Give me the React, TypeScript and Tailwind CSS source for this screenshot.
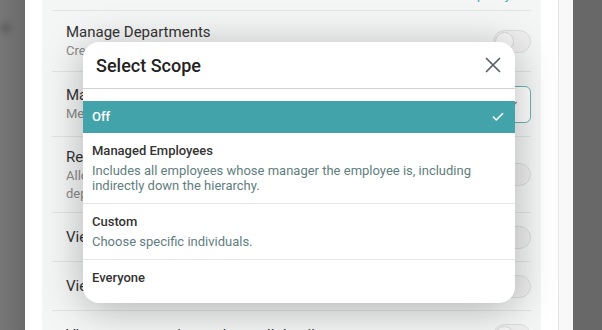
import { Check, ChevronDown, X } from "lucide-react";

type Row = {
  title: string;
  desc?: string;
  height: string;
  control: "toggle" | "select";
};

const rows: Row[] = [
  { title: "Manage Departments", desc: "Create, edit and delete departments.", height: "h-[61px]", control: "toggle" },
  { title: "Manage Employee Data", desc: "Member of the managed scope can be edited.", height: "h-[65px]", control: "select" },
  {
    title: "Request Time Off for Others",
    desc: "Allows the user to request absences for employees in their department and team.",
    height: "h-[76px]",
    control: "toggle",
  },
  { title: "View Reports", height: "h-[49px]", control: "toggle" },
  { title: "View Org Chart", height: "h-[49px]", control: "toggle" },
  { title: "View compensation and payroll details", height: "h-[49px]", control: "toggle" },
];

const options = [
  { label: "Off", selected: true },
  {
    label: "Managed Employees",
    desc: "Includes all employees whose manager the employee is, including indirectly down the hierarchy.",
  },
  { label: "Custom", desc: "Choose specific individuals." },
  { label: "Everyone" },
];

function Toggle() {
  return (
    <div className="flex h-[23px] w-[38px] shrink-0 items-center rounded-full border border-[#dcdcdc] bg-[#eeeeee] px-[1px]">
      <div className="h-[19px] w-[19px] rounded-full border border-[#d8d8d8] bg-[#f6f6f6]" />
    </div>
  );
}

export default function App() {
  return (
    <div
      className="relative flex h-[330px] w-[602px] overflow-hidden bg-white"
      style={{ fontFamily: "Roboto, 'Noto Sans', sans-serif" }}
    >
      {/* backdrop on the left */}
      <div className="relative w-[25px] shrink-0 bg-gradient-to-r from-[#777777] to-[#6a6a6a]">
        <div className="absolute left-[1px] top-[23px] h-[10px] w-[10px] rounded-full bg-[#5c5c5c] blur-[3px]" />
      </div>

      {/* drawer */}
      <div className="flex flex-1 bg-white">
        <div className="flex-1 pl-[17px] pr-[17px]">
          <div className="w-[499px] bg-[#f4f5f5] px-[10px]">
            <div className="flex h-[10px] justify-end overflow-hidden pr-[20px]">
              <span className="-mt-[13px] text-[13px] leading-[16px] text-[#3fa0a8]">Learn more about policy</span>
            </div>
            {rows.map((row) => (
              <div
                key={row.title}
                className={`flex ${row.height} items-center justify-between border-t border-[#e2e4e4] pl-[14px]`}
              >
                <div className="max-w-[380px]">
                  <p className="text-[15px] leading-[20px] text-[#333333]">{row.title}</p>
                  {row.desc && <p className="text-[13px] leading-[18px] text-[#8a8a8a]">{row.desc}</p>}
                </div>
                {row.control === "toggle" ? (
                  <Toggle />
                ) : (
                  <div className="flex h-[37px] w-[100px] items-center justify-end rounded-[6px] border border-[#6ab3b9] bg-white pr-[10px]">
                    <ChevronDown size={14} className="text-[#888888]" />
                  </div>
                )}
              </div>
            ))}
          </div>
        </div>
        <div className="w-[15px] shrink-0 border-l border-[#e6e6e6] bg-[#f8f8f8]" />
      </div>

      {/* backdrop on the right */}
      <div className="w-[29px] shrink-0 bg-[#686868]" />

      {/* modal */}
      <div className="absolute left-[83px] top-[42px] h-[261px] w-[432px] overflow-hidden rounded-[16px] bg-white shadow-[0_6px_40px_rgba(0,0,0,0.28)]">
        <div className="flex h-[47px] items-center justify-between border-b border-[#d2d2d2] pl-[13px] pr-[9px]">
          <h2 className="text-[18px] font-medium text-[#222222]">Select Scope</h2>
          <X size={26} strokeWidth={1.6} className="text-[#5a6265]" />
        </div>
        <div className="pt-[12px]">
          {options.map((opt) =>
            opt.selected ? (
              <div key={opt.label} className="flex h-[32px] items-center justify-between bg-[#43a3ab] pl-[9px] pr-[10px]">
                <span className="text-[13px] font-medium text-white">{opt.label}</span>
                <Check size={14} strokeWidth={2.6} className="text-white" />
              </div>
            ) : (
              <div key={opt.label} className="border-b border-[#e6e6e6] pb-[10px] pl-[9px] pr-[20px] pt-[9px] last:border-b-0">
                <p className="text-[13px] font-medium leading-[18px] text-[#333333]">{opt.label}</p>
                {opt.desc && (
                  <p className="mt-[3px] text-[13px] leading-[15px] text-[#5f7e80]">{opt.desc}</p>
                )}
              </div>
            )
          )}
        </div>
      </div>
    </div>
  );
}
